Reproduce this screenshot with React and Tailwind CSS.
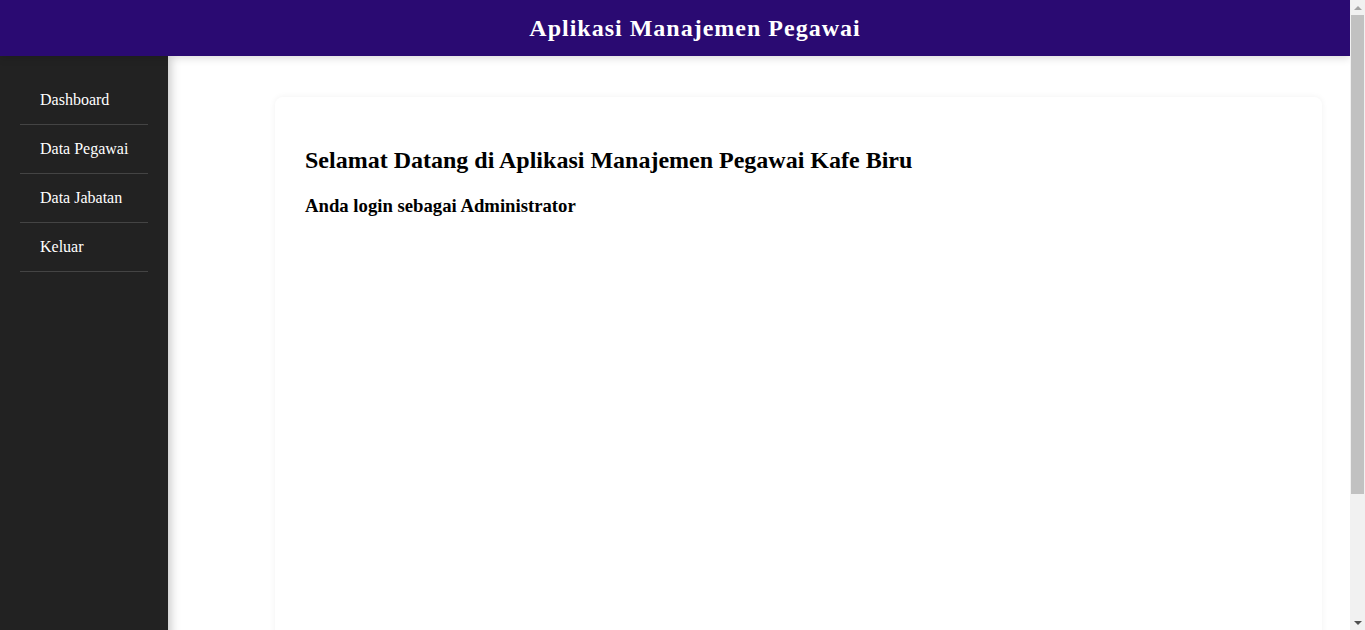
export default function App() {
  const menu = ['Dashboard', 'Data Pegawai', 'Data Jabatan', 'Keluar'];

  return (
    <div className="flex h-screen overflow-hidden bg-white font-['Liberation_Serif','Times_New_Roman',serif] text-black">
      <div className="flex-1 min-w-0 overflow-hidden">
        <div className="min-h-[788px]">
          {/* Header */}
          <header className="relative z-20 h-14 bg-[#2a0a72] pl-10 flex items-center justify-center shadow-[0_2px_8px_rgba(0,0,0,0.15)]">
            <h1 className="text-[24px] font-bold tracking-[1px] text-white leading-none">Aplikasi Manajemen Pegawai</h1>
          </header>

          <div className="flex min-h-[732px]">
            {/* Sidebar */}
            <aside className="relative z-10 w-[168px] shrink-0 bg-[#222222] px-5 pt-5 shadow-[2px_0_10px_rgba(0,0,0,0.25)]">
              <ul>
                {menu.map((item) => (
                  <li key={item} className="border-b border-[#444444] pl-5 py-[15px] text-[16px] leading-[18px] text-white">
                    {item}
                  </li>
                ))}
              </ul>
            </aside>

            {/* Konten */}
            <main className="flex-1 pl-[107px] pr-[28px] pt-[41px] flex">
              <div className="flex-1 rounded-lg bg-white p-[30px] shadow-[0_0_6px_rgba(0,0,0,0.06)]">
                <h2 className="text-[24px] font-bold leading-[27.6px] mt-5 mb-5">
                  Selamat Datang di Aplikasi Manajemen Pegawai Kafe Biru
                </h2>
                <h3 className="text-[18.72px] font-bold leading-[21px]">Anda login sebagai Administrator</h3>
              </div>
            </main>
          </div>
        </div>
      </div>

      {/* Scrollbar */}
      <div className="w-[15px] shrink-0 bg-[#f1f1f1] flex flex-col">
        <div className="h-[15px] flex items-center justify-center">
          <div className="w-0 h-0 border-x-[4px] border-b-[4px] border-x-transparent border-b-[#a3a3a3]" />
        </div>
        <div className="h-[479px] mx-[1px] bg-[#c1c1c1]" />
        <div className="flex-1" />
        <div className="h-[15px] flex items-center justify-center">
          <div className="w-0 h-0 border-x-[4px] border-t-[4px] border-x-transparent border-t-[#505050]" />
        </div>
      </div>
    </div>
  );
}
